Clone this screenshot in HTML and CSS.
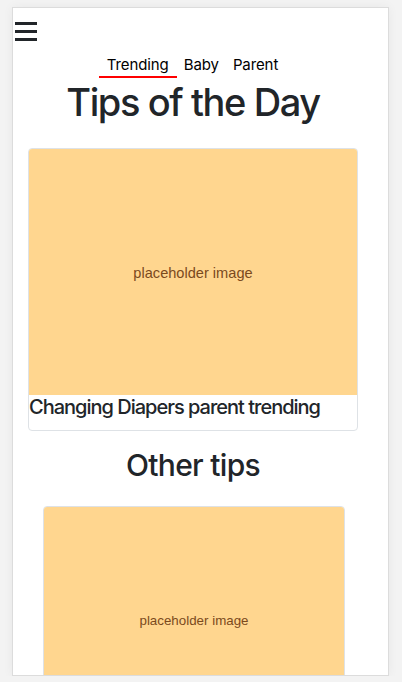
FILE: index.html
```html
<!DOCTYPE html>
<html lang="en">
<head>
<meta charset="utf-8">
<title>Tips of the Day</title>
<link rel="stylesheet" href="styles.css">
</head>
<body>
<div class="frame">
  <div class="page">
    <button class="menu" aria-label="Menu"><span></span><span></span><span></span></button>
    <nav class="tabs">
      <a class="tab active">Trending</a>
      <a class="tab">Baby</a>
      <a class="tab">Parent</a>
    </nav>
    <h1 class="title">Tips of the Day</h1>
    <div class="card card-main">
      <svg class="ph" viewBox="0 0 328 246" preserveAspectRatio="none">
        <rect width="328" height="246" fill="#ffd68f"/>
        <text x="164" y="129" text-anchor="middle" font-family="Liberation Sans, Arial, sans-serif" font-size="14.6" fill="#7b4a1d">placeholder image</text>
      </svg>
      <div class="card-text">Changing Diapers parent trending</div>
    </div>
    <h2 class="subtitle">Other tips</h2>
    <div class="card card-small">
      <svg class="ph" viewBox="0 0 328 246" preserveAspectRatio="none">
        <rect width="328" height="246" fill="#ffd68f"/>
        <text x="164" y="129" text-anchor="middle" font-family="Liberation Sans, Arial, sans-serif" font-size="14.6" fill="#7b4a1d">placeholder image</text>
      </svg>
    </div>
  </div>
</div>
</body>
</html>
```
FILE: styles.css
```css
html, body {
  margin: 0;
  padding: 0;
  background: #f3f3f3;
}
body {
  font-family: Inter, "Noto Sans", sans-serif;
  color: #212529;
}
.frame {
  margin: 7px 0 0 12px;
  width: 377px;
  height: 669px;
  box-sizing: border-box;
  border: 1px solid #dcdcdc;
  background: #fff;
  box-shadow: 0 0 10px rgba(0, 0, 0, 0.05);
  overflow: hidden;
}
.page {
  width: 360px;
}
.menu {
  display: flex;
  flex-direction: column;
  gap: 5px;
  margin: 14px 0 0 2px;
  padding: 0;
  border: 0;
  background: none;
  width: 22px;
}
.menu span {
  display: block;
  height: 3px;
  width: 22px;
  background: #212529;
}
.tabs {
  display: flex;
  justify-content: center;
  margin-top: 15px;
  padding-right: 2px;
}
.tab {
  font-size: 15px;
  line-height: 18px;
  letter-spacing: -0.1px;
  padding: 0 7px 2px;
  border-bottom: 2px solid transparent;
  color: #000;
}
.tab.active {
  padding: 0 8px 2px;
  border-bottom-color: #ff0000;
}
.title {
  margin: 2px 0 22px;
  font-size: 38px;
  line-height: 1.2;
  font-weight: 500;
  letter-spacing: -1.4px;
  text-align: center;
}
.card {
  border: 1px solid #dee2e6;
  border-radius: 4px;
  overflow: hidden;
  background: #fff;
}
.card-main {
  margin: 0 15px;
}
.card-small {
  margin-left: 30px;
  width: 302px;
  box-sizing: border-box;
}
.ph {
  display: block;
  width: 100%;
  aspect-ratio: 4 / 3;
}
.card-text {
  font-size: 20px;
  line-height: 24px;
  font-weight: 500;
  letter-spacing: -1px;
  padding-bottom: 11px;
}
.subtitle {
  margin: 16px 0 23px;
  font-size: 30px;
  line-height: 36px;
  font-weight: 500;
  letter-spacing: -0.7px;
  text-align: center;
}
```
